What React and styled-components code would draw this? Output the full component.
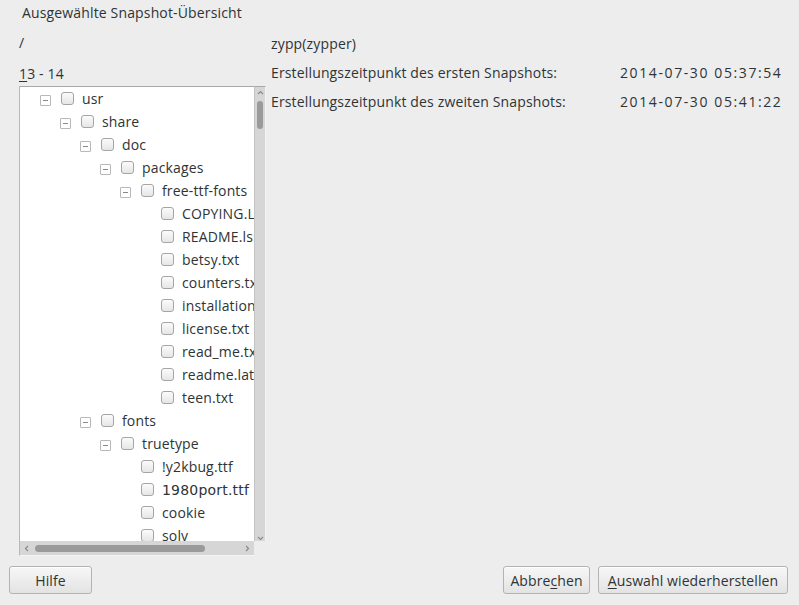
import React from "react";
import styled, { createGlobalStyle } from "styled-components";

const Global = createGlobalStyle`
  html, body { margin: 0; padding: 0; background: #ededed; }
  body { font-family: "Open Sans", "Noto Sans", sans-serif; font-size: 14px; letter-spacing: 0.15px; color: #2e3436; }
`;

const Dialog = styled.div`
  width: 799px;
  height: 605px;
  box-sizing: border-box;
  display: flex;
  flex-direction: column;
  padding-top: 4px;
  overflow: hidden;
`;

const Title = styled.div`
  height: 18px;
  line-height: 18px;
  padding-left: 22px;
`;

const Main = styled.div`
  display: grid;
  grid-template-columns: 247px 1fr;
  column-gap: 5px;
  padding-left: 19px;
`;

const LeftCol = styled.div`
  display: flex;
  flex-direction: column;
  padding-top: 12px;
`;

const Label = styled.div`
  height: 18px;
  line-height: 18px;
  margin-bottom: ${(p) => p.$mb || 0}px;
`;

const TreeBox = styled.div`
  width: 247px;
  height: 470px;
  box-sizing: border-box;
  display: grid;
  grid-template-columns: 1fr 12px;
  grid-template-rows: 1fr 15px;
`;

const TreeView = styled.div`
  background: #fff;
  border-top: 1px solid #a9a9a9;
  border-left: 1px solid #b9b9b9;
  overflow: hidden;
`;

const Row = styled.div`
  height: 23px;
  display: flex;
  align-items: center;
  padding-left: ${(p) => 20 + p.$level * 20}px;
  white-space: nowrap;
`;

const ExpanderSlot = styled.div`
  width: 21px;
  height: 23px;
  flex: none;
  display: flex;
  align-items: center;
`;

const Expander = styled.div`
  width: 9px;
  height: 9px;
  border: 1px solid #b8b8b8;
  border-radius: 1px;
  box-sizing: content-box;
  display: flex;
  align-items: center;
  justify-content: center;
  margin-top: 3px;
  &::after {
    content: "";
    width: 5px;
    height: 1px;
    background: #8a8a8a;
  }
`;

const Check = styled.div`
  width: 11px;
  height: 11px;
  flex: none;
  border: 1px solid #a5a5a5;
  border-radius: 3px;
  background: linear-gradient(#fbfbfb, #e6e6e6);
  margin-right: 8px;
  margin-top: -1px;
`;

const RowText = styled.span`
  font-family: ${(p) => (p.$alt ? '"DejaVu Sans", sans-serif' : "inherit")};
  letter-spacing: ${(p) => (p.$alt ? "0.2px" : "inherit")};
  font-size: 14px;
`;

const VBar = styled.div`
  background: #d6d6d6;
  border-top: 1px solid #a9a9a9;
  border-left: 1px solid #c4c4c4;
  border-right: 1px solid #f5f5f5;
  display: flex;
  flex-direction: column;
  align-items: center;
  padding-top: 3px;
`;

const VThumb = styled.div`
  width: 6px;
  height: 28px;
  border-radius: 3px;
  background: #9a9a9a;
  margin-top: 6px;
`;

const HBar = styled.div`
  background: #d6d6d6;
  border-left: 1px solid #b9b9b9;
  border-bottom: 1px solid #f5f5f5;
  display: flex;
  align-items: center;
  padding: 0 4px;
  gap: 6px;
`;

const HThumb = styled.div`
  width: 170px;
  height: 7px;
  border-radius: 4px;
  background: #9a9a9a;
`;

const Spacer = styled.div`
  flex: 1;
`;

const Corner = styled.div`
  background: #ededed;
`;

const RightCol = styled.div`
  display: flex;
  flex-direction: column;
  padding-top: 13px;
  gap: 11px;
`;

const InfoRow = styled.div`
  display: grid;
  grid-template-columns: 349px auto;
  height: 18px;
  line-height: 18px;
  white-space: nowrap;
`;

const Date = styled.span`
  letter-spacing: 1.6px;
`;

const Footer = styled.div`
  margin-top: 10px;
  display: flex;
  gap: 8px;
  padding: 0 11px 0 9px;
`;

const Button = styled.button`
  width: ${(p) => p.$w}px;
  height: 28px;
  font-family: inherit;
  font-size: 14px;
  letter-spacing: 0.1px;
  color: #2e3436;
  border: 1px solid #b3b3b3;
  border-radius: 3px;
  background: linear-gradient(#f7f7f7, #e3e3e3);
  box-shadow: inset 0 1px 0 #fff;
  padding: 0;
`;

const U = styled.span`
  text-decoration: underline;
  text-underline-offset: 2px;
`;

const Arrow = ({ d }) => (
  <svg width="7" height="5" viewBox="0 0 7 5">
    <path
      d={d === "up" ? "M1 4 L3.5 1.5 L6 4" : "M1 1 L3.5 3.5 L6 1"}
      stroke="#8c8c8c"
      strokeWidth="1.2"
      fill="none"
    />
  </svg>
);

const HArrow = ({ d }) => (
  <svg width="5" height="7" viewBox="0 0 5 7">
    <path
      d={d === "left" ? "M4 1 L1.5 3.5 L4 6" : "M1 1 L3.5 3.5 L1 6"}
      stroke="#8c8c8c"
      strokeWidth="1.2"
      fill="none"
    />
  </svg>
);

const items = [
  { name: "usr", level: 0, exp: true },
  { name: "share", level: 1, exp: true },
  { name: "doc", level: 2, exp: true },
  { name: "packages", level: 3, exp: true },
  { name: "free-ttf-fonts", level: 4, exp: true },
  { name: "COPYING.LIB", level: 5 },
  { name: "README.lsm", level: 5 },
  { name: "betsy.txt", level: 5 },
  { name: "counters.txt", level: 5 },
  { name: "installation.txt", level: 5 },
  { name: "license.txt", level: 5 },
  { name: "read_me.txt", level: 5 },
  { name: "readme.latin1", level: 5 },
  { name: "teen.txt", level: 5 },
  { name: "fonts", level: 2, exp: true },
  { name: "truetype", level: 3, exp: true },
  { name: "!y2kbug.ttf", level: 4 },
  { name: "1980port.ttf", level: 4, alt: true },
  { name: "cookie", level: 4 },
  { name: "solv", level: 4 },
  { name: "substance.ttf", level: 4 },
];

export default function App() {
  return (
    <>
      <Global />
      <Dialog>
        <Title>Ausgewählte Snapshot-Übersicht</Title>
        <Main>
          <LeftCol>
            <Label $mb={13}>/</Label>
            <Label $mb={3}>
              <U>1</U>3 - 14
            </Label>
            <TreeBox>
              <TreeView>
                {items.map((it) => (
                  <Row key={it.name} $level={it.level}>
                    <ExpanderSlot>{it.exp && <Expander />}</ExpanderSlot>
                    <Check />
                    <RowText $alt={it.alt}>{it.name}</RowText>
                  </Row>
                ))}
              </TreeView>
              <VBar>
                <Arrow d="up" />
                <VThumb />
                <Spacer />
                <Arrow d="down" />
              </VBar>
              <HBar>
                <HArrow d="left" />
                <HThumb />
                <Spacer />
                <HArrow d="right" />
              </HBar>
              <Corner />
            </TreeBox>
          </LeftCol>
          <RightCol>
            <InfoRow>zypp(zypper)</InfoRow>
            <InfoRow>
              <span>Erstellungszeitpunkt des ersten Snapshots:</span>
              <Date>2014-07-30 05:37:54</Date>
            </InfoRow>
            <InfoRow>
              <span>Erstellungszeitpunkt des zweiten Snapshots:</span>
              <Date>2014-07-30 05:41:22</Date>
            </InfoRow>
          </RightCol>
        </Main>
        <Footer>
          <Button $w={83}>Hilfe</Button>
          <Spacer />
          <Button $w={87}>
            Abbre<U>c</U>hen
          </Button>
          <Button $w={190}>
            <U>A</U>uswahl wiederherstellen
          </Button>
        </Footer>
      </Dialog>
    </>
  );
}
